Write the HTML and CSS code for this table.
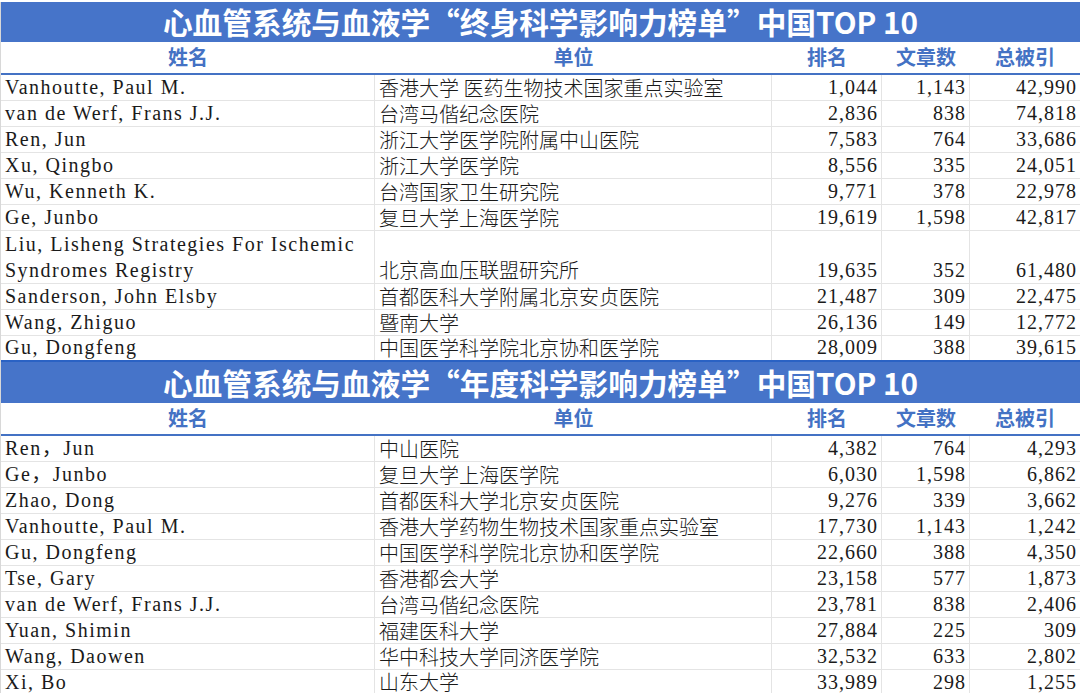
FILE: index.html
```html
<!DOCTYPE html>
<html lang="zh-CN">
<head>
<meta charset="utf-8">
<title>心血管系统与血液学 中国TOP 10</title>
<link rel="stylesheet" href="styles.css">
</head>
<body>
<main class="sheet">
  <section class="board board-life">
    <h1 class="title">心血管系统与血液学“终身科学影响力榜单”中国TOP 10</h1>
    <table class="grid">
      <colgroup><col class="c-name"><col class="c-unit"><col class="c-rank"><col class="c-art"><col class="c-cite"></colgroup>
      <thead>
        <tr><th>姓名</th><th>单位</th><th>排名</th><th>文章数</th><th>总被引</th></tr>
      </thead>
      <tbody>
        <tr><td class="name">Vanhoutte, Paul M.</td><td class="unit">香港大学 医药生物技术国家重点实验室</td><td class="num">1,044</td><td class="num">1,143</td><td class="num">42,990</td></tr>
        <tr><td class="name">van de Werf, Frans J.J.</td><td class="unit">台湾马偕纪念医院</td><td class="num">2,836</td><td class="num">838</td><td class="num">74,818</td></tr>
        <tr><td class="name">Ren, Jun</td><td class="unit">浙江大学医学院附属中山医院</td><td class="num">7,583</td><td class="num">764</td><td class="num">33,686</td></tr>
        <tr><td class="name">Xu, Qingbo</td><td class="unit">浙江大学医学院</td><td class="num">8,556</td><td class="num">335</td><td class="num">24,051</td></tr>
        <tr><td class="name">Wu, Kenneth K.</td><td class="unit">台湾国家卫生研究院</td><td class="num">9,771</td><td class="num">378</td><td class="num">22,978</td></tr>
        <tr><td class="name">Ge, Junbo</td><td class="unit">复旦大学上海医学院</td><td class="num">19,619</td><td class="num">1,598</td><td class="num">42,817</td></tr>
        <tr class="tall"><td class="name">Liu, Lisheng Strategies For Ischemic<br>Syndromes Registry</td><td class="unit">北京高血压联盟研究所</td><td class="num">19,635</td><td class="num">352</td><td class="num">61,480</td></tr>
        <tr><td class="name">Sanderson, John Elsby</td><td class="unit">首都医科大学附属北京安贞医院</td><td class="num">21,487</td><td class="num">309</td><td class="num">22,475</td></tr>
        <tr><td class="name">Wang, Zhiguo</td><td class="unit">暨南大学</td><td class="num">26,136</td><td class="num">149</td><td class="num">12,772</td></tr>
        <tr class="cut"><td class="name">Gu, Dongfeng</td><td class="unit">中国医学科学院北京协和医学院</td><td class="num">28,009</td><td class="num">388</td><td class="num">39,615</td></tr>
      </tbody>
    </table>
  </section>
  <section class="board board-year">
    <h1 class="title">心血管系统与血液学“年度科学影响力榜单”中国TOP 10</h1>
    <table class="grid">
      <colgroup><col class="c-name"><col class="c-unit"><col class="c-rank"><col class="c-art"><col class="c-cite"></colgroup>
      <thead>
        <tr><th>姓名</th><th>单位</th><th>排名</th><th>文章数</th><th>总被引</th></tr>
      </thead>
      <tbody>
        <tr><td class="name">Ren，Jun</td><td class="unit">中山医院</td><td class="num">4,382</td><td class="num">764</td><td class="num">4,293</td></tr>
        <tr><td class="name">Ge，Junbo</td><td class="unit">复旦大学上海医学院</td><td class="num">6,030</td><td class="num">1,598</td><td class="num">6,862</td></tr>
        <tr><td class="name">Zhao, Dong</td><td class="unit">首都医科大学北京安贞医院</td><td class="num">9,276</td><td class="num">339</td><td class="num">3,662</td></tr>
        <tr><td class="name">Vanhoutte, Paul M.</td><td class="unit">香港大学药物生物技术国家重点实验室</td><td class="num">17,730</td><td class="num">1,143</td><td class="num">1,242</td></tr>
        <tr><td class="name">Gu, Dongfeng</td><td class="unit">中国医学科学院北京协和医学院</td><td class="num">22,660</td><td class="num">388</td><td class="num">4,350</td></tr>
        <tr><td class="name">Tse, Gary</td><td class="unit">香港都会大学</td><td class="num">23,158</td><td class="num">577</td><td class="num">1,873</td></tr>
        <tr><td class="name">van de Werf, Frans J.J.</td><td class="unit">台湾马偕纪念医院</td><td class="num">23,781</td><td class="num">838</td><td class="num">2,406</td></tr>
        <tr><td class="name">Yuan, Shimin</td><td class="unit">福建医科大学</td><td class="num">27,884</td><td class="num">225</td><td class="num">309</td></tr>
        <tr><td class="name">Wang, Daowen</td><td class="unit">华中科技大学同济医学院</td><td class="num">32,532</td><td class="num">633</td><td class="num">2,802</td></tr>
        <tr><td class="name">Xi, Bo</td><td class="unit">山东大学</td><td class="num">33,989</td><td class="num">298</td><td class="num">1,255</td></tr>
      </tbody>
    </table>
  </section>
</main>
</body>
</html>
```

FILE: styles.css
```css
* { box-sizing: border-box; }

html, body {
  margin: 0;
  padding: 0;
  background: #ffffff;
}

.sheet {
  width: 1080px;
  height: 693px;
  padding-top: 2px;
  overflow: hidden;
  font-family: "Liberation Serif", "Noto Sans CJK SC", serif;
  color: #1a1a1a;
}

.board {
  display: flex;
  flex-direction: column;
  border-left: 1px solid #d8d8d8;
}

.title {
  margin: 0;
  height: 40px;
  background: #4674c9;
  color: #ffffff;
  font-family: "Noto Sans CJK SC", sans-serif;
  font-weight: 700;
  font-size: 29.7px;
  line-height: 40px;
  text-align: center;
  white-space: nowrap;
  letter-spacing: 0;
}

.board-year .title {
  height: 43px;
  line-height: 41px;
  border-top: 2px solid #2a62c4;
}

.grid {
  width: 1079px;
  table-layout: fixed;
  border-collapse: separate;
  border-spacing: 0;
}

.c-name { width: 374px; }
.c-unit { width: 397px; }
.c-rank { width: 110px; }
.c-art  { width: 88px; }
.c-cite { width: 110px; }

.grid th {
  height: 33px;
  padding: 0 0 2px;
  border-bottom: 2px solid #4472c4;
  font-family: "Noto Sans CJK SC", sans-serif;
  font-weight: 700;
  font-size: 20px;
  line-height: 29px;
  color: #4472c4;
  text-align: center;
}

.board-year .grid th {
  height: 32px;
}

.grid td {
  height: 26px;
  padding: 0 4px;
  border-bottom: 1px solid #e4e4e4;
  border-right: 1px solid #e4e4e4;
  font-size: 20px;
  line-height: 25px;
  vertical-align: bottom;
  white-space: nowrap;
}

.grid td:last-child { border-right: none; }

.grid td.name {
  letter-spacing: 1.5px;
}

.grid td.unit {
  font-family: "Noto Sans CJK SC", sans-serif;
  font-weight: 300;
  font-size: 20px;
  letter-spacing: 0;
}

.grid td.num {
  text-align: right;
  letter-spacing: 1px;
  padding-right: 3px;
}

.grid tr.tall td {
  height: 52px;
  line-height: 26px;
}

.grid tr.tall td.name { white-space: normal; }

.grid tr.cut td {
  height: 24px;
  line-height: 23px;
  border-bottom: none;
  vertical-align: top;
}

.board-year .grid td {
  height: 25.7px;
}

.board-year .grid tr:last-child td {
  border-bottom: 2px solid #2a62c4;
  height: 26px;
  line-height: 24px;
  vertical-align: top;
}
```
